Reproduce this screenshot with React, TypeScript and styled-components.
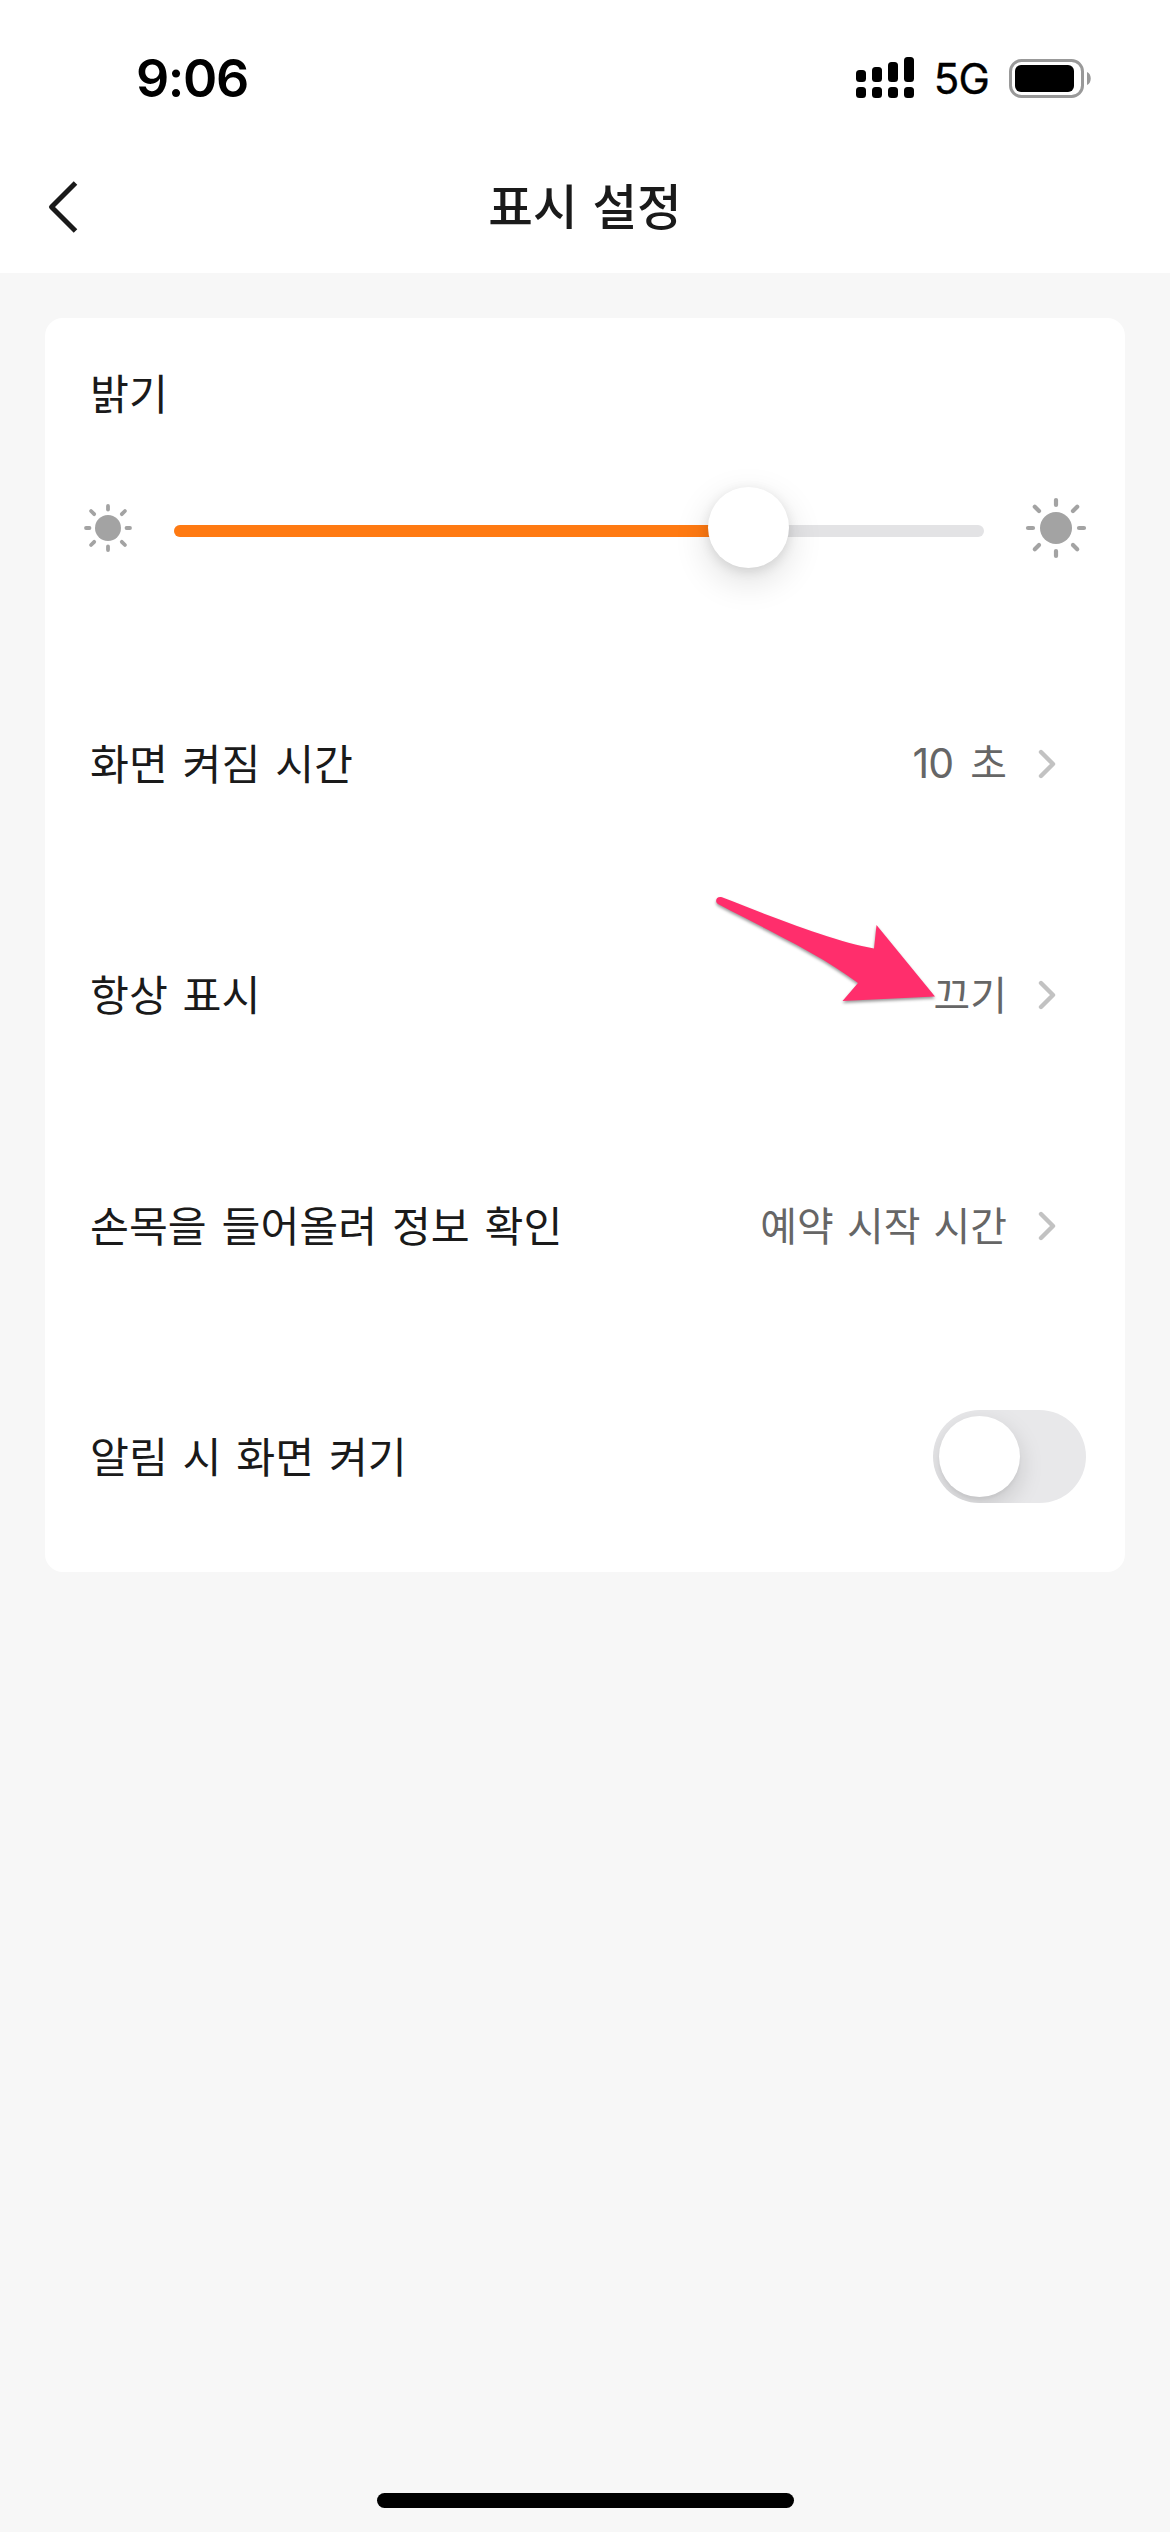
import React, { useState } from "react";
import styled, { createGlobalStyle } from "styled-components";

const GlobalStyle = createGlobalStyle`
  * { box-sizing: border-box; }
  body {
    margin: 0;
    background: #f7f7f7;
    font-family: "Noto Sans CJK KR", sans-serif;
    color: #1a1a1a;
  }
`;

const Screen = styled.div`
  position: relative;
  display: flex;
  flex-direction: column;
  width: 1170px;
  height: 2532px;
  overflow: hidden;
  background: #f7f7f7;
`;

const StatusBar = styled.header`
  display: flex;
  justify-content: space-between;
  align-items: center;
  height: 141px;
  padding: 15px 78px 0 136px;
  background: #fff;
  color: #000;
  font-family: Inter, sans-serif;
`;

const Clock = styled.span`
  padding-top: 1px;
  font-size: 52px;
  font-weight: 600;
  line-height: 60px;
  letter-spacing: -1.4px;
`;

const StatusIcons = styled.div`
  display: flex;
  align-items: center;
`;

const Network = styled.span`
  margin: 1px 20px 0 19px;
  font-size: 42px;
  line-height: 50px;
  letter-spacing: -0.8px;
  -webkit-text-stroke: 0.4px #000;
`;

const NavBar = styled.nav`
  display: grid;
  grid-template-columns: 120px 1fr 120px;
  align-items: center;
  height: 132px;
  background: #fff;
`;

const BackButton = styled.button`
  display: flex;
  padding: 0 0 0 46px;
  border: 0;
  background: none;
`;

const Title = styled.h1`
  margin: 0;
  padding-bottom: 6px;
  text-align: center;
  font-size: 48.5px;
  font-weight: 500;
  line-height: 64px;
  word-spacing: 4px;
`;

const Card = styled.main`
  margin: 45px 45px 0;
  border-radius: 18px;
  background: #fff;
`;

const Brightness = styled.section`
  display: flex;
  flex-direction: column;
  height: 330px;
  padding: 43px 37px 0 37px;
`;

const Label = styled.span`
  font-size: 42.3px;
  line-height: 62px;
  word-spacing: 5.3px;
  white-space: nowrap;
`;

const BrightnessLabel = styled(Label)`
  padding-left: 8px;
`;

const SliderRow = styled.div`
  display: flex;
  align-items: center;
  justify-content: space-between;
  height: 81px;
  margin-top: 64px;
`;

const Track = styled.div`
  display: flex;
  align-items: center;
  width: 810px;
  height: 12px;
  margin-top: 6px;
  border-radius: 6px;
  background: #e3e3e5;
`;

const Fill = styled.div`
  height: 12px;
  border-radius: 6px 0 0 6px;
  background: #ff7a12;
`;

const Thumb = styled.div`
  flex: none;
  width: 81px;
  height: 81px;
  margin: -7px 0 0 -41px;
  border-radius: 50%;
  background: #fff;
  box-shadow: 0 12px 36px rgba(0, 0, 0, 0.14), 0 3px 12px rgba(0, 0, 0, 0.1);
`;

const Row = styled.div`
  display: flex;
  align-items: center;
  justify-content: space-between;
  height: 231px;
  padding: 0 39px 0 45px;
`;

const RowLabel = styled(Label)`
  padding-bottom: 4px;
`;

const RowEnd = styled.div`
  display: flex;
  align-items: center;
  gap: 31px;
  padding-right: 30px;
`;

const Value = styled.span`
  padding-bottom: 3px;
  color: #666;
  font-size: 39.9px;
  line-height: 60px;
  word-spacing: 4.3px;
`;

const Digits = styled.span`
  margin-right: 4px;
  font-family: Inter, sans-serif;
  font-size: 41px;
  letter-spacing: -1px;
`;

const Switch = styled.button`
  display: flex;
  width: 153px;
  height: 93px;
  padding: 6px;
  border: 0;
  border-radius: 47px;
  background: #e8e8ea;
  overflow: hidden;
`;

const SwitchKnob = styled.span<{ $on: boolean }>`
  width: 81px;
  height: 81px;
  margin-left: ${(p) => (p.$on ? "60px" : "0")};
  border-radius: 50%;
  background: #fff;
  box-shadow: 0 9px 24px rgba(0, 0, 0, 0.15), 0 3px 3px rgba(0, 0, 0, 0.04);
`;

const Pointer = styled.svg`
  position: absolute;
  left: 700px;
  top: 880px;
  filter: drop-shadow(0 2px 1.5px rgba(0, 0, 0, 0.4));
`;

const HomeIndicator = styled.div`
  width: 417px;
  height: 15px;
  margin: auto auto 24px 377px;
  border-radius: 8px;
  background: #000;
`;

function Signal() {
  const tops = [13, 10, 5, 0];
  return (
    <svg width="60" height="42" viewBox="0 0 60 42">
      {tops.map((top, i) => (
        <g key={top}>
          <rect x={1 + i * 16} y={top} width="10" height={25 - top} rx="3.5" />
          <rect x={1 + i * 16} y="30" width="10" height="11" rx="3.5" />
        </g>
      ))}
    </svg>
  );
}

function Battery() {
  return (
    <svg width="83" height="39" viewBox="0 0 83 39">
      <rect x="1.5" y="1.5" width="72" height="36" rx="11" fill="none" stroke="#999" strokeWidth="3" />
      <rect x="6" y="6" width="59" height="27" rx="6" />
      <path d="M78 13c5 2 5 11 0 13z" fill="#999" />
    </svg>
  );
}

function Sun({ large = false }: { large?: boolean }) {
  const size = large ? 64 : 52;
  const ray = large ? [23, 28] : [18.5, 22];
  const diag = large ? [24, 30] : [19.5, 24];
  return (
    <svg width={size} height={size} viewBox={`${-size / 2} ${-size / 2} ${size} ${size}`}>
      <circle r={large ? 16 : 13} fill="#a3a3a3" />
      {Array.from({ length: 8 }, (_, i) => {
        const [from, to] = i % 2 ? diag : ray;
        return (
          <line
            key={i}
            y1={-from}
            y2={-to}
            stroke="#a3a3a3"
            strokeWidth={large ? 4.2 : 3.8}
            strokeLinecap="round"
            transform={`rotate(${i * 45})`}
          />
        );
      })}
    </svg>
  );
}

function Chevron() {
  return (
    <svg width="18" height="30" viewBox="0 0 18 30">
      <path d="M3 3l12 12L3 27" fill="none" stroke="#c2c2c2" strokeWidth="4.4" strokeLinecap="round" strokeLinejoin="round" />
    </svg>
  );
}

function LinkRow({ label, children }: { label: string; children: React.ReactNode }) {
  return (
    <Row>
      <RowLabel>{label}</RowLabel>
      <RowEnd>
        <Value>{children}</Value>
        <Chevron />
      </RowEnd>
    </Row>
  );
}

export default function App() {
  const [wakeOnAlert, setWakeOnAlert] = useState(false);
  const brightness = 71;
  return (
    <>
      <GlobalStyle />
      <Screen>
        <StatusBar>
          <Clock>9:06</Clock>
          <StatusIcons>
            <Signal />
            <Network>5G</Network>
            <Battery />
          </StatusIcons>
        </StatusBar>
        <NavBar>
          <BackButton aria-label="뒤로">
            <svg width="34" height="54" viewBox="0 0 34 54">
              <path d="M29.500 3L5.500 27l24 24" fill="none" stroke="#1a1a1a" strokeWidth="5" strokeLinejoin="round" />
            </svg>
          </BackButton>
          <Title>표시 설정</Title>
        </NavBar>
        <Card>
          <Brightness>
            <BrightnessLabel>밝기</BrightnessLabel>
            <SliderRow>
              <Sun />
              <Track>
                <Fill style={{ width: `${brightness}%` }} />
                <Thumb />
              </Track>
              <Sun large />
            </SliderRow>
          </Brightness>
          <LinkRow label="화면 켜짐 시간">
            <Digits>10</Digits> 초
          </LinkRow>
          <LinkRow label="항상 표시">끄기</LinkRow>
          <LinkRow label="손목을 들어올려 정보 확인">예약 시작 시간</LinkRow>
          <Row>
            <RowLabel>알림 시 화면 켜기</RowLabel>
            <Switch role="switch" aria-checked={wakeOnAlert} onClick={() => setWakeOnAlert(!wakeOnAlert)}>
              <SwitchKnob $on={wakeOnAlert} />
            </Switch>
          </Row>
        </Card>
        <HomeIndicator />
        <Pointer width="250" height="140" viewBox="700 880 250 140">
          <path
            d="M722 897.300C775 918 835 942 874 948.500L876.500 925L935 996.500L842.500 1001L858 983C820 954 765 929 718 904C714 901 717 895.500 722 897.300Z"
            fill="#ff2e6c"
          />
        </Pointer>
      </Screen>
    </>
  );
}
